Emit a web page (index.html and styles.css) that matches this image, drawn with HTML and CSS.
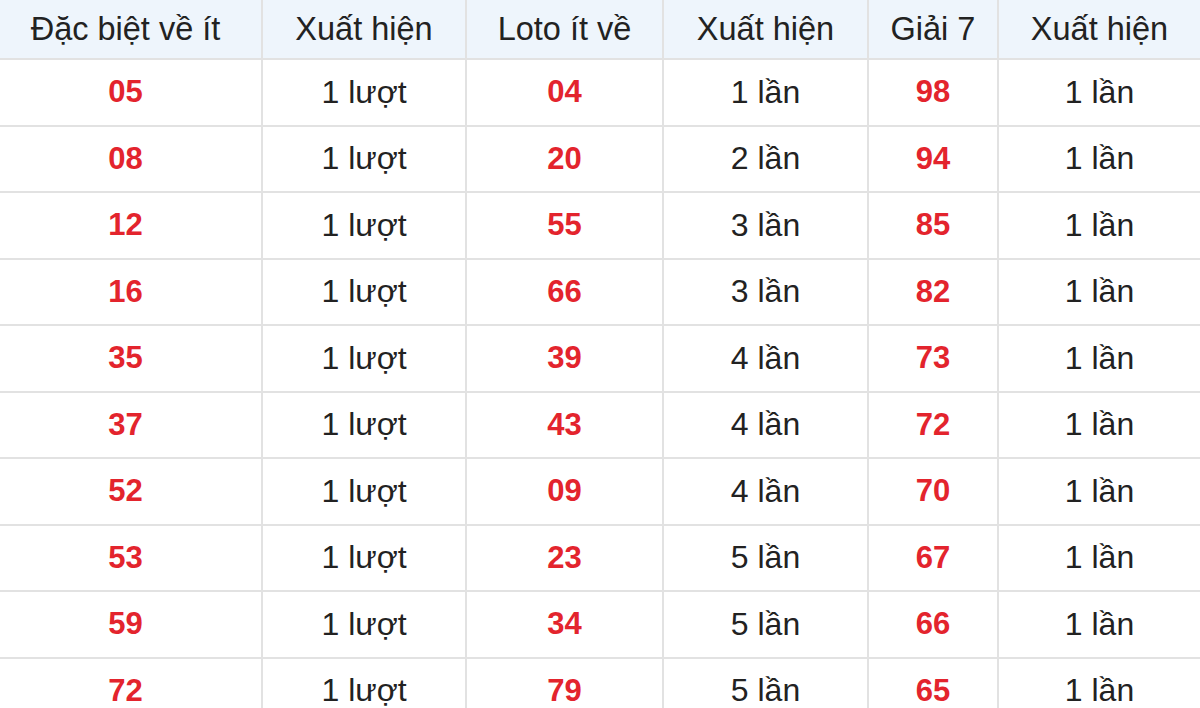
FILE: index.html
```html
<!DOCTYPE html>
<html lang="vi">
<head>
<meta charset="utf-8">
<link rel="stylesheet" href="styles.css">
</head>
<body>
<table class="stats">
  <colgroup>
    <col class="c1"><col class="c2"><col class="c3"><col class="c4"><col class="c5"><col class="c6">
  </colgroup>
  <thead>
    <tr><th>Đặc biệt về ít</th><th>Xuất hiện</th><th>Loto ít về</th><th>Xuất hiện</th><th>Giải 7</th><th>Xuất hiện</th></tr>
  </thead>
  <tbody>
    <tr><td class="num">05</td><td>1 lượt</td><td class="num">04</td><td>1 lần</td><td class="num">98</td><td>1 lần</td></tr>
    <tr><td class="num">08</td><td>1 lượt</td><td class="num">20</td><td>2 lần</td><td class="num">94</td><td>1 lần</td></tr>
    <tr><td class="num">12</td><td>1 lượt</td><td class="num">55</td><td>3 lần</td><td class="num">85</td><td>1 lần</td></tr>
    <tr><td class="num">16</td><td>1 lượt</td><td class="num">66</td><td>3 lần</td><td class="num">82</td><td>1 lần</td></tr>
    <tr><td class="num">35</td><td>1 lượt</td><td class="num">39</td><td>4 lần</td><td class="num">73</td><td>1 lần</td></tr>
    <tr><td class="num">37</td><td>1 lượt</td><td class="num">43</td><td>4 lần</td><td class="num">72</td><td>1 lần</td></tr>
    <tr><td class="num">52</td><td>1 lượt</td><td class="num">09</td><td>4 lần</td><td class="num">70</td><td>1 lần</td></tr>
    <tr><td class="num">53</td><td>1 lượt</td><td class="num">23</td><td>5 lần</td><td class="num">67</td><td>1 lần</td></tr>
    <tr><td class="num">59</td><td>1 lượt</td><td class="num">34</td><td>5 lần</td><td class="num">66</td><td>1 lần</td></tr>
    <tr><td class="num">72</td><td>1 lượt</td><td class="num">79</td><td>5 lần</td><td class="num">65</td><td>1 lần</td></tr>
  </tbody>
</table>
</body>
</html>
```
FILE: styles.css
```css
html, body {
  margin: 0;
  padding: 0;
  background: #ffffff;
  overflow: hidden;
}
body {
  font-family: "Liberation Sans", Arial, sans-serif;
  color: #222222;
}
.stats {
  width: 1210px;
  margin-left: -10px;
  border-collapse: collapse;
  table-layout: fixed;
}
.c1 { width: 272px; }
.c2 { width: 204px; }
.c3 { width: 197px; }
.c4 { width: 205px; }
.c5 { width: 130px; }
.c6 { width: 202px; }
.stats th,
.stats td {
  border: 2px solid #e2e2e2;
  text-align: center;
  vertical-align: middle;
  font-size: 32px;
  padding: 0;
}
.stats th {
  height: 58px;
  background: #eef5fc;
  font-weight: normal;
  font-size: 32.5px;
  color: #222222;
  border-top: none;
}
.stats tr > :first-child { border-left: none; }
.stats tr > :last-child { border-right: none; }
.stats td {
  height: 64.5px;
}
.stats td.num {
  color: #e3242d;
  font-weight: bold;
  font-size: 31px;
}
```
